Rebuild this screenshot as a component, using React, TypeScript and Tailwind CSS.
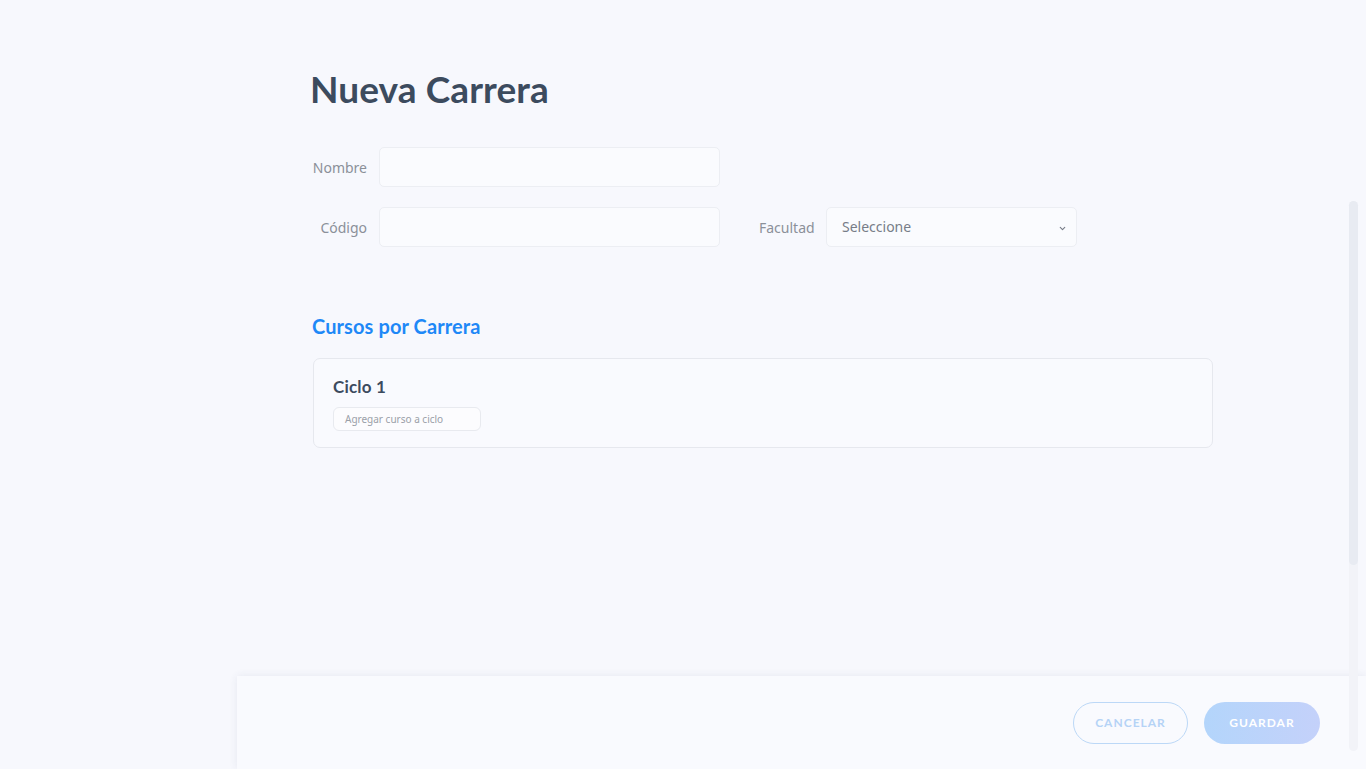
import { ChevronDown } from "lucide-react";

const labelClass =
  "text-[14px] text-[#8b9099] text-right font-['Noto_Sans',sans-serif]";
const inputClass =
  "h-10 rounded-[5px] border border-[#eceef3] bg-[#fafbfe] px-3 text-sm text-[#4b5563] outline-none";

export default function App() {
  return (
    <div className="relative flex h-[769px] w-full overflow-hidden bg-[#f7f8fd] font-['Noto_Sans',sans-serif]">
      {/* Sidebar space */}
      <div className="w-[237px] shrink-0" />

      {/* Main */}
      <div className="flex flex-1 flex-col">
        <div className="flex-1 pl-[73px] pt-[70px]">
          <h1 className="font-['Lato',sans-serif] text-[37px] font-bold leading-none tracking-[0.1px] text-[#3c4b5e]">
            Nueva Carrera
          </h1>

          {/* Form */}
          <div className="mt-[40px] flex flex-col gap-5 pl-[1px]">
            <div className="flex items-center">
              <label className={`${labelClass} w-[56px]`}>Nombre</label>
              <input className={`${inputClass} ml-3 w-[341px]`} />
            </div>
            <div className="flex items-center">
              <label className={`${labelClass} w-[56px]`}>Código</label>
              <input className={`${inputClass} ml-3 w-[341px]`} />
              <label className={`${labelClass} ml-[39px] w-[55px]`}>Facultad</label>
              <div className="relative ml-3 w-[251px]">
                <div className={`${inputClass} flex w-full items-center pl-[15px] text-[14px] text-[#777d88]`}>
                  Seleccione
                </div>
                <ChevronDown
                  className="absolute right-[10px] top-[17px] text-[#777d88]"
                  size={9}
                  strokeWidth={3}
                />
              </div>
            </div>
          </div>

          {/* Cursos */}
          <h2 className="mt-[64px] pl-[2px] font-['Lato',sans-serif] text-[20px] font-bold tracking-[0.1px] text-[#1e88f7]">
            Cursos por Carrera
          </h2>
          <div className="mt-[17px] ml-[3px] w-[900px] rounded-[7px] border border-[#e6e8ee] bg-[#f9fafe] px-[19px] pb-[16px] pt-[16px]">
            <div className="font-['Lato',sans-serif] text-[17px] font-bold leading-6 tracking-[0.2px] text-[#3c4b5e]">
              Ciclo 1
            </div>
            <div className="mt-[8px] flex h-6 w-[148px] items-center rounded-[6px] border border-[#e8eaef] bg-[#fcfcfe] pl-[11px] text-[10px] text-[#9aa0a8]">
              Agregar curso a ciclo
            </div>
          </div>
        </div>

        {/* Footer */}
        <div className="flex h-[93px] items-center justify-end gap-4 bg-[#f9fafe] pr-[46px] shadow-[0_0_8px_rgba(60,70,110,0.09)]">
          <button className="h-[42px] w-[115px] rounded-full border border-[#bcd8f7] bg-transparent font-['Lato',sans-serif] text-[12px] font-bold tracking-[1px] text-[#b5d3f6]">
            CANCELAR
          </button>
          <button className="h-[42px] w-[116px] rounded-full bg-gradient-to-r from-[#b3d5fb] to-[#c4d1fa] font-['Lato',sans-serif] text-[12px] font-bold tracking-[1px] text-white">
            GUARDAR
          </button>
        </div>
      </div>

      {/* Scrollbar overlay */}
      <div className="absolute left-[1349px] top-[201px] h-[550px] w-[9px] rounded-[5px] bg-[#f2f3f8]">
        <div className="h-[364px] w-full rounded-[5px] bg-[#e8ebf2]" />
      </div>
    </div>
  );
}
